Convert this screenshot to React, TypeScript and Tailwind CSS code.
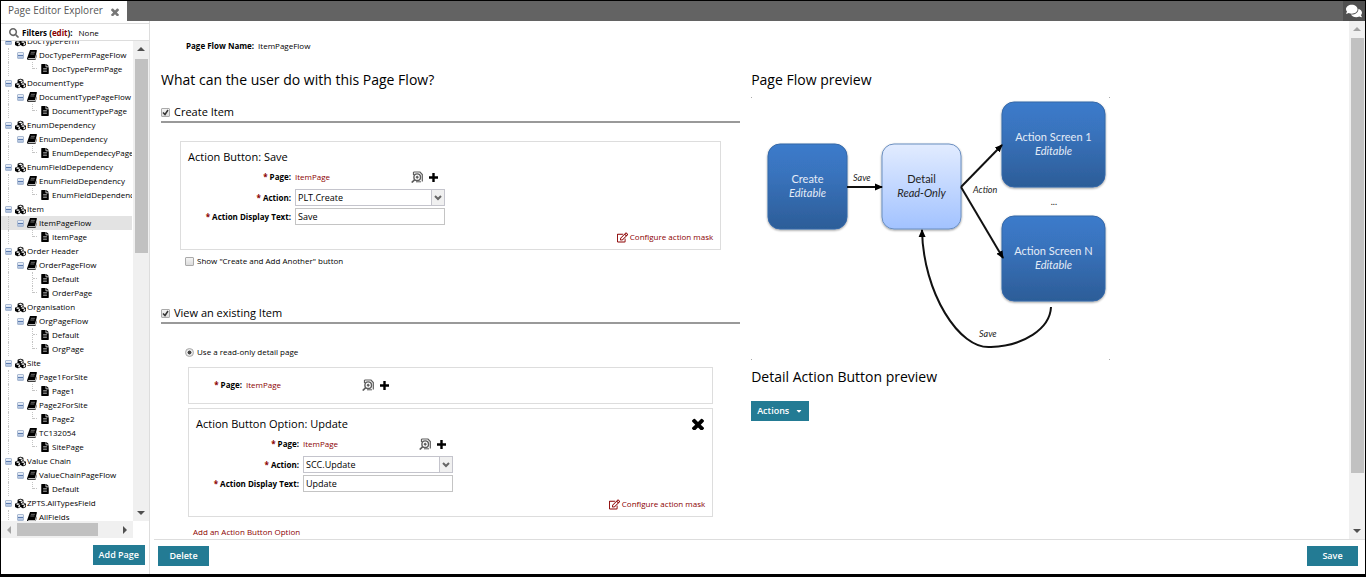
import clsx from "clsx";
import { type ReactNode, useId } from "react";
import {
	FaCaretDown,
	FaComments,
	FaCubes,
	FaFileAlt,
	FaRegEdit,
	FaSearch,
} from "react-icons/fa";

type NodeKind = "object" | "flow" | "page";

interface TreeNode {
	kind: NodeKind;
	label: string;
	selected?: boolean;
	hasNext?: boolean;
}

const TREE: TreeNode[] = [
	{ kind: "object", label: "DocTypePerm" },
	{ kind: "flow", label: "DocTypePermPageFlow" },
	{ kind: "page", label: "DocTypePermPage" },
	{ kind: "object", label: "DocumentType" },
	{ kind: "flow", label: "DocumentTypePageFlow" },
	{ kind: "page", label: "DocumentTypePage" },
	{ kind: "object", label: "EnumDependency" },
	{ kind: "flow", label: "EnumDependency" },
	{ kind: "page", label: "EnumDependecyPage" },
	{ kind: "object", label: "EnumFieldDependency" },
	{ kind: "flow", label: "EnumFieldDependency" },
	{ kind: "page", label: "EnumFieldDependency" },
	{ kind: "object", label: "Item" },
	{ kind: "flow", label: "ItemPageFlow", selected: true },
	{ kind: "page", label: "ItemPage" },
	{ kind: "object", label: "Order Header" },
	{ kind: "flow", label: "OrderPageFlow" },
	{ kind: "page", label: "Default", hasNext: true },
	{ kind: "page", label: "OrderPage" },
	{ kind: "object", label: "Organisation" },
	{ kind: "flow", label: "OrgPageFlow" },
	{ kind: "page", label: "Default", hasNext: true },
	{ kind: "page", label: "OrgPage" },
	{ kind: "object", label: "Site" },
	{ kind: "flow", label: "Page1ForSite", hasNext: true },
	{ kind: "page", label: "Page1" },
	{ kind: "flow", label: "Page2ForSite", hasNext: true },
	{ kind: "page", label: "Page2" },
	{ kind: "flow", label: "TC132054" },
	{ kind: "page", label: "SitePage" },
	{ kind: "object", label: "Value Chain" },
	{ kind: "flow", label: "ValueChainPageFlow" },
	{ kind: "page", label: "Default" },
	{ kind: "object", label: "ZPTS.AllTypesField" },
	{ kind: "flow", label: "AllFields" },
];

function CrossIcon({ className }: { className: string }) {
	return (
		<svg viewBox="302 302 1188 1188" className={className} fill="currentColor" aria-hidden="true">
			<path d="M1490 1322q0 40-28 68l-136 136q-28 28-68 28t-68-28l-294-294-294 294q-28 28-68 28t-68-28l-136-136q-28-28-28-68t28-68l294-294-294-294q-28-28-28-68t28-68l136-136q28-28 68-28t68 28l294 294 294-294q28-28 68-28t68 28l136 136q28 28 28 68t-28 68l-294 294 294 294q28 28 28 68z" />
		</svg>
	);
}

function BookIcon() {
	return (
		<svg viewBox="0 0 10 10" className="size-2.5" aria-hidden="true">
			<path d="M3 0h6.3q.8 0 .6.8L8 8.2H1.6q-.5 0-.5.5t.6.5h6.6L10 4v1.2L8.6 9.5q-.2.5-.7.5H1.2Q0 10 0 8.600z" />
			<path d="M3.900 2.300h4M3.400 4h4" stroke="#bbb" strokeWidth=".6" />
		</svg>
	);
}

function LookupIcon() {
	return (
		<svg viewBox="0 0 12 12" className="size-3" fill="none" stroke="#5c5c5c" aria-hidden="true">
			<path d="M2.500 4V1M2.500 1h6.500l2.300 2.500v7" strokeWidth="1.200" />
			<circle cx="6.200" cy="6.200" r="3.300" strokeWidth="1.400" />
			<circle cx="6.200" cy="6.200" r="1" fill="#5c5c5c" />
			<path d="M3.800 8.600L.7 11.500" strokeWidth="1.700" />
			<path d="M5 10.800h5" />
		</svg>
	);
}

function PlusIcon() {
	return (
		<svg viewBox="0 0 9 9" className="size-[9px]" aria-hidden="true">
			<path d="M3.300 0h2.400v3.300H9v2.400H5.700V9H3.300V5.700H0V3.300h3.300z" />
		</svg>
	);
}

function Toggle() {
	return (
		<button
			type="button"
			aria-label="Collapse"
			className="flex size-[7px] shrink-0 items-center justify-center rounded-[1px] border border-[#a9b9d2] bg-linear-to-b from-[#eef3fa] to-[#a9bddb]"
		>
			<span className="h-px w-[5px] bg-[#5b7bb0]" />
		</button>
	);
}

// Dotted guide that runs down the left of nested rows.
function Guide() {
	return (
		<span className="flex h-full w-[7px] shrink-0 justify-center">
			<span className="w-px border-l border-dotted border-[#c4c4c4]" />
		</span>
	);
}

function TreeRow({ node }: { node: TreeNode }) {
	return (
		<li className={clsx("flex h-3.5 items-center pl-1 whitespace-nowrap", node.selected && "bg-[#e3e3e3]")}>
			{node.kind === "object" && (
				<>
					<Toggle />
					<FaCubes className="ml-0.5 h-[11px] w-[13px] shrink-0" />
				</>
			)}
			{node.kind === "flow" && (
				<>
					<Guide />
					<span className="w-[5px] shrink-0" />
					<Toggle />
					<span className="mr-0.5 ml-[3px] shrink-0">
						<BookIcon />
					</span>
				</>
			)}
			{node.kind === "page" && (
				<>
					<Guide />
					<span className="w-5 shrink-0" />
					<span className="flex h-full w-[9px] shrink-0">
						<span
							className={clsx(
								"w-[5px] border-l border-dotted border-[#c4c4c4]",
								node.hasNext ? "h-full" : "h-[7px]",
							)}
						>
							<span className="mt-[6px] block border-b border-dotted border-[#c4c4c4]" />
						</span>
					</span>
					<FaFileAlt className="mr-[3px] h-2.5 w-2 shrink-0" />
				</>
			)}
			<span>{node.label}</span>
		</li>
	);
}

interface ScrollArrowProps {
	direction: "up" | "down" | "left" | "right";
	muted?: boolean;
}

function ScrollArrow({ direction, muted }: ScrollArrowProps) {
	return (
		<svg
			viewBox="0 0 16 16"
			className={clsx(
				"size-4 shrink-0",
				direction === "down" && "rotate-180",
				direction === "left" && "-rotate-90",
				direction === "right" && "rotate-90",
			)}
			fill={muted ? "#a3a3a3" : "#505050"}
			aria-hidden="true"
		>
			<path d="M8 6l4 4H4z" />
		</svg>
	);
}

function Sidebar() {
	return (
		<aside className="flex w-[149px] shrink-0 flex-col border-r border-[#ddd] pt-0.5">
			<div className="flex h-[18px] shrink-0 items-center border-y border-[#ddd] pt-0.5 pl-2 leading-[14px]">
				<FaSearch className="mr-[3px] size-2.5 text-[#666]" />
				<b>
					Filters (
					<a href="#edit" className="text-[#8b0000]">
						edit
					</a>
					):
				</b>
				<span className="ml-1.5">None</span>
			</div>
			<div className="flex min-h-0 flex-1">
				<div className="min-w-0 flex-1 overflow-hidden">
					<ul className="-mt-[7px]">
						{TREE.map((node, i) => (
							<TreeRow key={`${node.label}-${i}`} node={node} />
						))}
					</ul>
				</div>
				<div className="ml-px flex w-4 flex-col items-center bg-[#f0f0f0]">
					<ScrollArrow direction="up" />
					<div className="mt-0.5 h-[194px] w-[13px] bg-[#c1c1c1]" />
					<div className="flex-1" />
					<ScrollArrow direction="down" />
				</div>
			</div>
			<div className="mr-4 flex h-[17px] shrink-0 items-center bg-[#f0f0f0]">
				<ScrollArrow direction="left" muted />
				<div className="h-[13px] w-[81px] bg-[#c1c1c1]" />
				<div className="flex-1" />
				<ScrollArrow direction="right" />
			</div>
			<div className="flex h-9 shrink-0 items-start justify-end pt-[7px] pr-1">
				<Button>Add Page</Button>
			</div>
		</aside>
	);
}

function Button({ children }: { children: ReactNode }) {
	return (
		<button
			type="button"
			className="flex h-5 min-w-[51px] items-center justify-center bg-[#237b94] px-1.5 text-[9px] font-semibold whitespace-nowrap text-white"
		>
			{children}
		</button>
	);
}

interface CheckProps {
	label: string;
	checked?: boolean;
	large?: boolean;
}

function Check({ label, checked, large }: CheckProps) {
	return (
		<label
			className={clsx("flex items-center", large ? "gap-1 text-[11px] leading-[18px]" : "gap-[3px] leading-[14px]")}
		>
			<span className="grid">
				<input
					type="checkbox"
					defaultChecked={checked}
					className="peer col-start-1 row-start-1 size-[9px] appearance-none rounded-[1px] border border-[#aaa] bg-linear-to-b from-[#f4f4f4] to-[#dcdcdc]"
				/>
				<svg
					viewBox="0 0 9 9"
					className="pointer-events-none invisible col-start-1 row-start-1 size-[9px] peer-checked:visible"
					fill="none"
					stroke="#333"
					strokeWidth="1.5"
					aria-hidden="true"
				>
					<path d="M2 4.500l2 2 3-4.500" />
				</svg>
			</span>
			{label}
		</label>
	);
}

function Required({ children }: { children: ReactNode }) {
	return (
		<>
			<span className="text-[#8b0000]">* </span>
			{children}:
		</>
	);
}

function PageField({ labelWidth }: { labelWidth: string }) {
	return (
		<div className="flex h-5 items-center">
			<span className={clsx("mr-1 shrink-0 text-right font-bold", labelWidth)}>
				<Required>Page</Required>
			</span>
			<a href="#page" className="w-[116px] text-[#8b0000]">
				ItemPage
			</a>
			<button type="button" aria-label="Look up page" className="mr-1.5">
				<LookupIcon />
			</button>
			<button type="button" aria-label="Add page">
				<PlusIcon />
			</button>
		</div>
	);
}

interface ActionCardProps {
	title: string;
	action: string;
	text: string;
	removable?: boolean;
}

function ActionCard({ title, action, text, removable }: ActionCardProps) {
	const id = useId();

	return (
		<section className="border border-[#ddd] pt-[5px] pb-1">
			<div className="flex items-center justify-between pr-2 pl-[7px]">
				<h3 className="text-[11px] leading-5">{title}</h3>
				{removable && (
					<button type="button" aria-label="Remove action">
						<CrossIcon className="size-3" />
					</button>
				)}
			</div>
			<PageField labelWidth="w-[110px]" />
			<div className="mt-0.5 flex items-center">
				<label htmlFor={`${id}-action`} className="mr-1 w-[110px] text-right font-bold">
					<Required>Action</Required>
				</label>
				<span className="grid w-[150px]">
					<select
						id={`${id}-action`}
						className="col-start-1 row-start-1 h-[17px] w-full appearance-none border border-[#c4c4cc] bg-white pl-0.5 text-[9px]"
					>
						<option>{action}</option>
					</select>
					<span className="pointer-events-none col-start-1 row-start-1 flex w-3.5 items-center justify-center justify-self-end border border-[#c4c4cc] bg-[#f0f0f0]">
						<svg viewBox="0 0 8 6" className="h-1.5 w-2" fill="none" stroke="#666" strokeWidth="2" aria-hidden="true">
							<path d="M1 1l3 3 3-3" />
						</svg>
					</span>
				</span>
			</div>
			<div className="mt-0.5 flex items-center">
				<label htmlFor={`${id}-text`} className="mr-1 w-[110px] text-right font-bold">
					<Required>Action Display Text</Required>
				</label>
				<input
					id={`${id}-text`}
					defaultValue={text}
					className="h-[17px] w-[150px] border border-[#c4c4c4] pl-0.5 text-[9px]"
				/>
			</div>
			<div className="mt-1 flex justify-end pr-[7px]">
				<a href="#mask" className="flex items-center gap-0.5 leading-4 text-[#8b0000]">
					<FaRegEdit className="size-[11px]" />
					Configure action mask
				</a>
			</div>
		</section>
	);
}

interface FlowBoxProps {
	x: number;
	y: number;
	width: number;
	title: string;
	mode: string;
	light?: boolean;
}

function FlowBox({ x, y, width, title, mode, light }: FlowBoxProps) {
	const cx = x + width / 2;
	return (
		<g textAnchor="middle" fontSize="11" fill={light ? "#222" : "#e4ecf7"}>
			<rect
				x={x}
				y={y}
				width={width}
				height="85"
				rx="12"
				fill={light ? "url(#flow-light)" : "url(#flow-dark)"}
				stroke={light ? "#6b8fc0" : "#3568a8"}
				filter="url(#flow-shadow)"
			/>
			<text x={cx} y={y + 39}>
				{title}
			</text>
			<text x={cx} y={y + 53} fontStyle="italic">
				{mode}
			</text>
		</g>
	);
}

function FlowDiagram() {
	return (
		<svg
			viewBox="0 0 359 263"
			className="mt-[7px] h-[263px] w-[359px] font-[Lato,sans-serif]"
			role="img"
			aria-label="Page flow"
		>
			<defs>
				<linearGradient id="flow-dark" x2="0" y2="1">
					<stop offset="0" stopColor="#3b7bcb" />
					<stop offset="0.35" stopColor="#3973bd" />
					<stop offset="1" stopColor="#2c5d98" />
				</linearGradient>
				<linearGradient id="flow-light" x2="0" y2="1">
					<stop offset="0" stopColor="#e2ecff" />
					<stop offset="1" stopColor="#a2c2ff" />
				</linearGradient>
				<filter id="flow-shadow" x="-10%" y="-10%" width="120%" height="125%">
					<feDropShadow dx="0" dy="1" stdDeviation="1" floodOpacity="0.4" />
				</filter>
				<marker
					id="flow-arrow"
					viewBox="0 0 8 8"
					refX="7"
					refY="4"
					markerWidth="8"
					markerHeight="8"
					markerUnits="userSpaceOnUse"
					orient="auto"
				>
					<path d="M0 .5L8 4 0 7.500z" />
				</marker>
			</defs>
			<FlowBox x={17} y={47} width={79} title="Create" mode="Editable" />
			<FlowBox x={131} y={47} width={79} title="Detail" mode="Read-Only" light />
			<FlowBox x={251} y={5} width={103} title="Action Screen 1" mode="Editable" />
			<FlowBox x={251} y={119} width={103} title="Action Screen N" mode="Editable" />
			<g fill="none" stroke="#111" strokeWidth="2">
				<path d="M96 90H131" markerEnd="url(#flow-arrow)" />
				<path d="M210 90L251 48" markerEnd="url(#flow-arrow)" />
				<path d="M210 90L252 161" markerEnd="url(#flow-arrow)" />
				<path d="M300 210C299 232 272 249 240 250C208 253 172 195 171 133" markerEnd="url(#flow-arrow)" />
			</g>
			<g fontSize="9" fontStyle="italic" fill="#222">
				<text x="102" y="84">Save</text>
				<text x="222" y="96">Action</text>
				<text x="228" y="240">Save</text>
				<text x="300" y="108">...</text>
			</g>
			<path fill="#aaa" d="M0 0h1v1H0zM358 0h1v1h-1zM0 262h1v1H0zM358 262h1v1h-1z" />
		</svg>
	);
}

function FlowSettings() {
	return (
		<div className="w-[49%] shrink-0">
			<h1 className="text-sm leading-5">What can the user do with this Page Flow?</h1>
			<div className="mt-[13px] border-b-2 border-[#999]">
				<Check label="Create Item" checked large />
			</div>
			<div className="mt-[18px] px-[19px]">
				<ActionCard title="Action Button: Save" action="PLT.Create" text="Save" />
			</div>
			<div className="mt-1 ml-6">
				<Check label={'Show "Create and Add Another" button'} />
			</div>

			<div className="mt-9 border-b-2 border-[#999]">
				<Check label="View an existing Item" checked large />
			</div>
			<label className="mt-[21px] ml-6 flex items-center gap-[3px] leading-[14px]">
				<input
					type="radio"
					defaultChecked
					className="size-[9px] appearance-none rounded-full border border-[#aaa] bg-[#e6e6e6] checked:bg-[radial-gradient(#444_35%,#e6e6e6_45%)]"
				/>
				Use a read-only detail page
			</label>
			<div className="mt-2 flex flex-col gap-1 px-[27px]">
				<div className="border border-[#ddd] pt-[7px] pb-2">
					<PageField labelWidth="w-[53px]" />
				</div>
				<ActionCard title="Action Button Option: Update" action="SCC.Update" text="Update" removable />
			</div>
			<a href="#add-option" className="mt-2 ml-8 block leading-[14px] text-[#8b0000]">
				Add an Action Button Option
			</a>
		</div>
	);
}

export default function App() {
	return (
		<div className="flex h-screen flex-col overflow-hidden border border-b-3 border-black bg-white font-['Open_Sans',sans-serif] text-[8px] text-black">
			<header className="flex h-5 shrink-0 items-stretch bg-[#636363]">
				<div className="flex items-center gap-2 bg-white pr-2 pb-0.5 pl-[7px] text-[#555]">
					<span className="text-[10px] leading-4">Page Editor Explorer</span>
					<button type="button" aria-label="Close tab" className="pt-1 text-[#777]">
						<CrossIcon className="size-2" />
					</button>
				</div>
				<button
					type="button"
					aria-label="Chat"
					className="ml-auto flex w-[22px] items-center justify-center bg-[#505050] text-white"
				>
					<FaComments className="size-4" />
				</button>
			</header>

			<div className="flex min-h-0 flex-1">
				<Sidebar />
				<div className="flex min-w-0 flex-1 flex-col">
					<div className="flex min-h-0 flex-1">
						<main className="min-w-0 flex-1 overflow-hidden pt-[18px] pr-1.5 pl-[11px]">
							<p className="mb-[17px] ml-[25px] leading-[14px]">
								<b className="mr-1">Page Flow Name:</b>
								ItemPageFlow
							</p>
							<div className="flex gap-[11px]">
								<FlowSettings />
								<div>
									<h2 className="text-sm leading-5">Page Flow preview</h2>
									<FlowDiagram />
									<h2 className="mt-[7px] mb-3.5 text-sm leading-5">Detail Action Button preview</h2>
									<Button>
										Actions
										<FaCaretDown className="ml-1.5 size-2" />
									</Button>
								</div>
							</div>
						</main>
						<div className="flex w-4 flex-col items-center bg-[#f0f0f0]">
							<ScrollArrow direction="up" muted />
							<div className="mt-px h-[84%] w-[13px] bg-[#c1c1c1]" />
							<div className="flex-1" />
							<ScrollArrow direction="down" />
						</div>
					</div>
					<footer className="ml-1 flex h-[35px] shrink-0 items-start justify-between border-t border-[#ddd] pt-1.5 pr-[7px] pl-1">
						<Button>Delete</Button>
						<Button>Save</Button>
					</footer>
				</div>
			</div>
		</div>
	);
}
